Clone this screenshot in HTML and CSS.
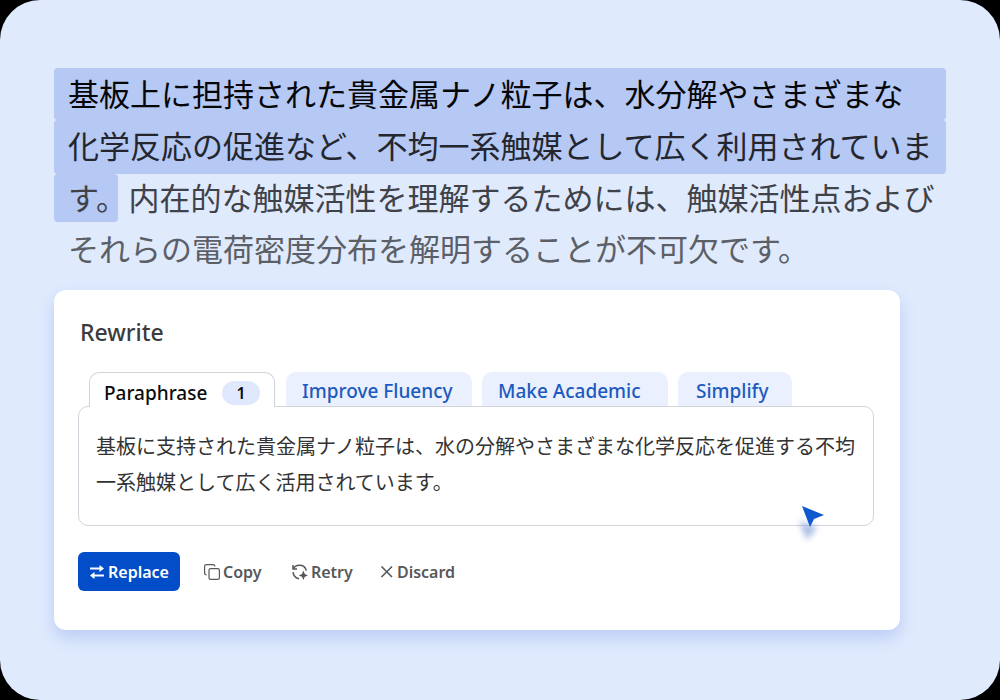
FILE: index.html
```html
<!DOCTYPE html>
<html lang="ja">
<head>
    <meta charset="UTF-8">
    <meta name="viewport" content="width=device-width, initial-scale=1.0">
    <title>Rewrite</title>
    <link rel="stylesheet" href="styles.css">
</head>
<body>
    <main class="stage">
        <p class="source">
            <span class="line line-1 selected">基板上に担持された貴金属ナノ粒子は、水分解やさまざまな</span>
            <span class="line line-2 selected">化学反応の促進など、不均一系触媒として広く利用されていま</span>
            <span class="line line-3"><span class="selected-end">す。</span><span>内在的な触媒活性を理解するためには、触媒活性点および</span></span>
            <span class="line line-4">それらの電荷密度分布を解明することが不可欠です。</span>
        </p>

        <section class="card">
            <h2>Rewrite</h2>
            <div class="tabs" role="tablist">
                <button class="tab active" role="tab" aria-selected="true">Paraphrase <span class="count">1</span></button>
                <button class="tab" role="tab" aria-selected="false">Improve Fluency</button>
                <button class="tab" role="tab" aria-selected="false">Make Academic</button>
                <button class="tab short" role="tab" aria-selected="false">Simplify</button>
            </div>
            <div class="result" role="tabpanel">
                <p>基板に支持された貴金属ナノ粒子は、水の分解やさまざまな化学反応を促進する不均一系触媒として広く活用されています。</p>
                <svg class="cursor" width="32" height="42" viewBox="0 0 32 42" aria-hidden="true">
                    <path class="cursor-shadow" d="M3 18 L21 24 L17 30 L11 37 Z"/>
                    <path d="M6 3 L28 12 L18 16 L14 24 Z" fill="#1058d0"/>
                </svg>
            </div>
            <div class="actions">
                <button class="action primary">
                    <svg width="16" height="16" viewBox="0 0 16 16" fill="none" stroke="currentColor" stroke-width="2" aria-hidden="true">
                        <path d="M1 4.5H12M4 11.5H15"/>
                        <path d="M10.5 1L15 4.5L10.5 8ZM5.5 8L1 11.5L5.5 15Z" fill="currentColor" stroke="none"/>
                    </svg>
                    Replace
                </button>
                <button class="action">
                    <svg width="16" height="16" viewBox="0 0 16 16" fill="none" stroke="currentColor" stroke-width="1.2" aria-hidden="true">
                        <rect x="5" y="4.6" width="10.4" height="10.8" rx="1.6"/>
                        <path d="M2.6 10.8C1.2 10.8 0.6 10 0.6 9V2.4C0.6 1.2 1.2 0.6 2.4 0.6H9C10.2 0.6 10.9 1.2 10.9 2.4"/>
                    </svg>
                    Copy
                </button>
                <button class="action">
                    <svg width="16" height="16" viewBox="0 0 16 16" fill="none" stroke="currentColor" stroke-width="1.5" aria-hidden="true">
                        <path d="M1 1V5H5M1.3 4.8C2.5 2.4 4.8 1.2 7.4 1.2C10.8 1.2 13.6 3.4 14.3 6.6"/>
                        <path d="M1 8.2C1.4 11.6 3.6 14.2 7 14.7"/>
                        <path d="M11.4 6.6L12.8 10L16 11.4L12.8 12.8L11.4 16L10 12.8L6.8 11.4L10 10Z" fill="currentColor" stroke="none"/>
                    </svg>
                    Retry
                </button>
                <button class="action">
                    <svg width="14" height="14" viewBox="0 0 14 14" fill="none" stroke="currentColor" stroke-width="1.6" aria-hidden="true">
                        <path d="M1.5 1.5L12 12M12 1.5L1.5 12"/>
                    </svg>
                    Discard
                </button>
            </div>
        </section>
    </main>
</body>
</html>
```
FILE: styles.css
```css
* {
    box-sizing: border-box;
}

body {
    margin: 0;
    background: #000;
    font-family: "Noto Sans", "Noto Sans CJK JP", sans-serif;
}

.stage {
    min-height: 100vh;
    padding: 68px 54px;
    background: #dfeafd;
    border-radius: 40px;
}

.source {
    margin: 0;
    font-family: "Noto Sans CJK JP", sans-serif;
    font-size: 31px;
    font-weight: 400;
    line-height: 50px;
}

.line {
    display: block;
    padding-left: 14px;
    white-space: nowrap;
}

.line-1 { color: #050608; }
.line-2 { color: #23262d; }
.line-3 { color: #3f4248; }
.line-4 { color: #5c5f65; }

.selected {
    padding-bottom: 2px;
    background: #b6c8f4;
    border-radius: 4px;
}

.line-2.selected {
    padding-bottom: 4px;
}

.line-3 {
    display: flex;
    gap: 10px;
    padding-left: 0;
    line-height: 46px;
}

.line-4 {
    line-height: 52px;
}

/* half-width full stop, so the highlight ends right after it */
.selected-end {
    padding: 0 7px 2px 14px;
    background: #b6c8f4;
    border-radius: 4px;
    font-feature-settings: "halt";
}

.card {
    margin: 16px 46px 0 0;
    padding: 24px 26px 39px 24px;
    background: #fff;
    border-radius: 12px;
    box-shadow: 0 8px 16px #bccdf5;
}

h2 {
    margin: 0;
    padding-left: 2px;
    color: #3b3b3d;
    font-size: 23px;
    font-weight: 500;
    line-height: 36px;
}

button {
    border: none;
    font-family: inherit;
    font-weight: 500;
    cursor: pointer;
}

.tabs {
    display: flex;
    gap: 10px;
    margin: 22px 0 0 11px;
}

.tab {
    width: 186px;
    height: 34px;
    padding: 1px 16px 0;
    background: #eaf0fd;
    border-radius: 10px 10px 0 0;
    color: #1c5abf;
    font-size: 19px;
    line-height: 36px;
    text-align: left;
    white-space: nowrap;
}

.tab.short {
    width: 114px;
    padding: 1px 18px 0;
}

.tab.active {
    position: relative;
    z-index: 1;
    display: flex;
    align-items: center;
    justify-content: space-between;
    height: 35px;
    margin: 0 1px -1px 0;
    padding: 5px 14px 0;
    background: #fff;
    border: 1px solid #d2d4dc;
    border-bottom: none;
    color: #0b0b0d;
}

.count {
    width: 38px;
    background: #dfe8fc;
    border-radius: 12px;
    font-size: 16px;
    font-weight: 600;
    line-height: 24px;
    text-align: center;
}

.result {
    position: relative;
    min-height: 120px;
    padding: 21px 17px;
    border: 1px solid #d2d4dc;
    border-radius: 10px;
}

.result p {
    margin: 0;
    color: #333;
    font-family: "Noto Sans CJK JP", sans-serif;
    font-size: 20px;
    font-weight: 400;
    line-height: 36px;
}

.cursor {
    position: absolute;
    right: 45px;
    bottom: -20px;
}

.cursor-shadow {
    fill: #6f90d0;
    opacity: 0.6;
    filter: blur(3px);
}

.actions {
    display: flex;
    gap: 24px;
    margin-top: 26px;
}

.action {
    display: flex;
    align-items: center;
    gap: 3px;
    min-width: 64px;
    height: 39px;
    padding: 0;
    background: none;
    border-radius: 6px;
    color: #58585a;
    font-size: 16px;
    font-weight: 600;
}

.action.primary {
    padding: 0 11px;
    background: #034dc8;
    color: #fff;
}
```
